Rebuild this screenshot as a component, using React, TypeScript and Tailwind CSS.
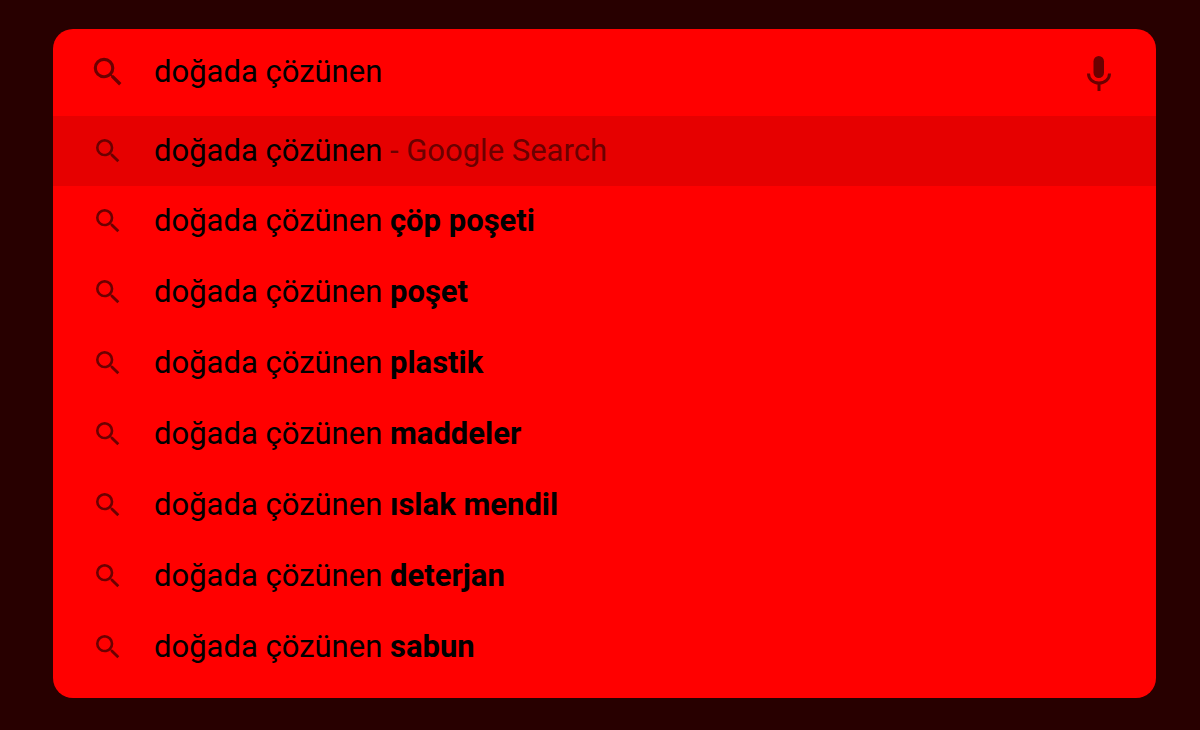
const SearchIcon = ({ className }: { className: string }) => (
  <svg viewBox="0 0 24 24" className={className} fill="currentColor" aria-hidden="true">
    <path d="M15.5 14h-.79l-.28-.27A6.471 6.471 0 0 0 16 9.5 6.5 6.5 0 1 0 9.5 16c1.61 0 3.09-.59 4.23-1.57l.27.28v.79l5 4.99L20.49 19l-4.99-5zm-6 0C7.01 14 5 11.99 5 9.5S7.01 5 9.5 5 14 7.01 14 9.5 11.99 14 9.5 14z" />
  </svg>
);

const completions = ["çöp poşeti", "poşet", "plastik", "maddeler", "ıslak mendil", "deterjan", "sabun"];

export default function App() {
  return (
    <main className="min-h-screen bg-[#280000] pt-[29px] pr-11 pb-8 pl-[53px] font-['Roboto',sans-serif] text-[31px] leading-[40px] font-normal text-black">
      <div className="overflow-hidden rounded-[20px] bg-[#ff0000] pb-[15px]">
        <form className="flex h-[87px] items-center pr-[38px] pb-px pl-9" onSubmit={(e) => e.preventDefault()}>
          <SearchIcon className="size-[38px] shrink-0 text-[#6b0000]" />
          <input
            aria-label="Search"
            defaultValue="doğada çözünen"
            className="ml-[27px] min-w-0 flex-1 bg-transparent outline-none"
          />
          <button type="button" aria-label="Search by voice" className="text-[#6b0000]">
            <svg viewBox="0 0 38 38" className="size-[38px]" fill="none" stroke="currentColor" strokeWidth="3" aria-hidden="true">
              <rect x="13.500" y="3" width="10.500" height="22" rx="5.250" fill="currentColor" stroke="none" />
              <path d="M8.500 20.500c0 5.500 4.500 9.500 10.500 9.500s10.500-4 10.500-9.500M19 30v8" />
            </svg>
          </button>
        </form>
        <ul>
          <li>
            <a href="#" className="flex h-[70px] items-center bg-[#e60000] pl-[39px]">
              <SearchIcon className="mr-[30px] size-8 shrink-0 text-[#6b0000]" />
              <span className="pb-px">doğada çözünen <span className="text-[#6b0000]">- Google Search</span></span>
            </a>
          </li>
          {completions.map((text) => (
            <li key={text}>
              <a href="#" className="flex h-[71px] items-center pb-px pl-[39px]">
                <SearchIcon className="mr-[30px] size-8 shrink-0 text-[#6b0000]" />
                <span className="pb-px">doğada çözünen <b className="font-bold">{text}</b></span>
              </a>
            </li>
          ))}
        </ul>
      </div>
    </main>
  );
}
